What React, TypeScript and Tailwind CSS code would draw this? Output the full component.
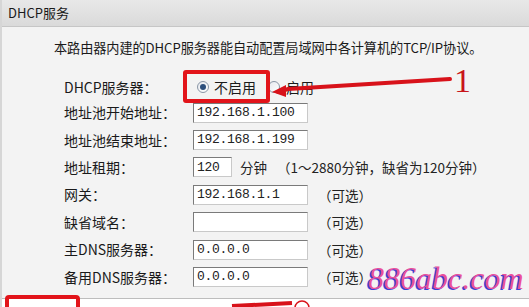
import React from "react";

const cjk = { fontFamily: '"Noto Sans CJK SC", "Noto Sans", sans-serif' };

function Input({ value, w = "w-[115px]" }: { value: string; w?: string }) {
  return (
    <div
      className={`${w} h-[20px] bg-white border border-[#7a7a7a] border-r-[#c9c9c9] border-b-[#c9c9c9] pl-[3px] flex items-center text-[13px] text-[#222] font-['Liberation_Mono',monospace] tracking-[-0.3px]`}
    >
      {value}
    </div>
  );
}

function Row({
  label,
  children,
  h = "h-[27.4px]",
}: {
  label: string;
  children: React.ReactNode;
  h?: string;
}) {
  return (
    <div className={`flex items-center ${h}`}>
      <div className="w-[129px] shrink-0 text-[14px] text-[#1a1a1a]">{label}</div>
      <div className="flex items-center">{children}</div>
    </div>
  );
}

function Radio({ checked }: { checked?: boolean }) {
  return (
    <span className="w-[12px] h-[12px] rounded-full border border-[#8a96a6] bg-gradient-to-br from-[#e6e9ee] to-[#ffffff] flex items-center justify-center">
      {checked && <span className="w-[6px] h-[6px] rounded-full bg-[#2d4f7c]" />}
    </span>
  );
}

const Opt = () => <span className="ml-[10px] text-[13.5px] text-[#222]">（可选）</span>;

export default function App() {
  return (
    <div
      className="relative w-[529px] h-[307px] bg-[#f3f3f3] overflow-hidden border-l-[2px] border-[#d6d6d6]"
      style={cjk}
    >
      <div className="h-[27px] bg-gradient-to-b from-[#e8e8e8] to-[#dadada] border-b border-[#c6c6c6] flex items-center pl-[6px] text-[13px] text-[#1a1a1a]">
        DHCP服务
      </div>
      <div className="pl-[52px] pt-[11px] h-[48px] text-[13.2px] text-[#1a1a1a] tracking-[-0.1px]">
        本路由器内建的DHCP服务器能自动配置局域网中各计算机的TCP/IP协议。
      </div>
      <div className="pl-[62px]">
        <Row label="DHCP服务器：" h="h-[24px]">
          <div className="flex items-center pl-[4px]">
            <Radio checked />
            <span className="ml-[5px] text-[14px] text-[#1a1a1a]">不启用</span>
            <span className="ml-[12px]">
              <Radio />
            </span>
            <span className="ml-[6px] text-[14px] text-[#1a1a1a]">启用</span>
          </div>
        </Row>
        <Row label="地址池开始地址：">
          <Input value="192.168.1.100" />
        </Row>
        <Row label="地址池结束地址：">
          <Input value="192.168.1.199" />
        </Row>
        <Row label="地址租期：">
          <Input value="120" w="w-[39px]" />
          <span className="ml-[8px] text-[13.5px] text-[#222]">分钟</span>
          <span className="ml-[10px] text-[13.5px] text-[#222]">（1～2880分钟，缺省为120分钟）</span>
        </Row>
        <Row label="网关：">
          <Input value="192.168.1.1" />
          <Opt />
        </Row>
        <Row label="缺省域名：">
          <Input value="" />
          <Opt />
        </Row>
        <Row label="主DNS服务器：">
          <Input value="0.0.0.0" />
          <Opt />
        </Row>
        <Row label="备用DNS服务器：">
          <Input value="0.0.0.0" />
          <Opt />
        </Row>
      </div>
      <div className="absolute left-0 right-0 top-[298px] h-[9px] bg-white border-t border-[#bdbdbd]" />

      {/* annotation box 1 */}
      <div className="absolute left-[181px] top-[70px] w-[87px] h-[33px] border-[4px] border-[#e2141a] rounded-[3px]" />
      {/* arrows and marks */}
      <svg className="absolute left-0 top-0" width="529" height="307">
        <path d="M448 79 L286 89 L276 92" stroke="#d8121a" strokeWidth="4" fill="none" strokeLinecap="round" />
        <path d="M270 92 L284 85 L284 97 Z" fill="#d8121a" />
        <rect x="5" y="297" width="71" height="14" fill="none" stroke="#e2141a" strokeWidth="4" rx="2" />
        <path d="M230 306 L290 303" stroke="#d8121a" strokeWidth="4" fill="none" />
        <circle cx="300" cy="308" r="7" fill="none" stroke="#d8121a" strokeWidth="1.5" />
      </svg>
      <span className="absolute left-[452px] top-[64px] text-[34px] leading-none text-[#c8141a] font-['Liberation_Serif',serif]">
        1
      </span>
      {/* watermark */}
      <span className="absolute left-[366px] top-[262px] text-[32px] leading-none italic text-[#e9509c] font-['Liberation_Serif',serif] [text-shadow:-1.5px_1px_0_#3b3fd8]">
        886abc.com
      </span>
    </div>
  );
}
